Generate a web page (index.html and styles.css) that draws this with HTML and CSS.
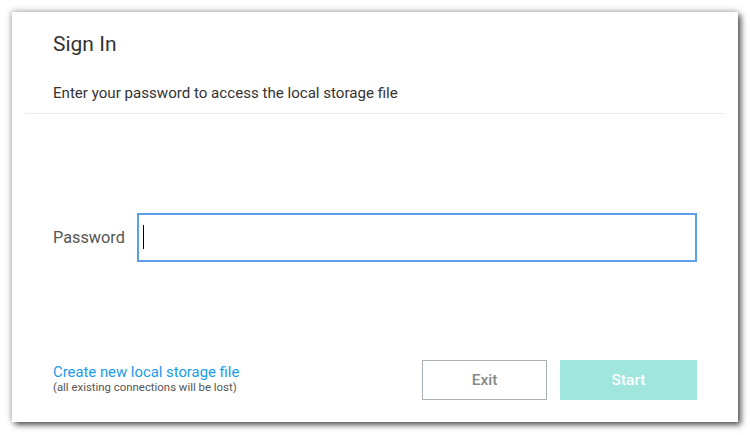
FILE: index.html
```html
<!DOCTYPE html>
<html>
<head>
<meta charset="utf-8">
<link rel="stylesheet" href="styles.css">
</head>
<body>
<div class="card">
  <div class="header">
    <div class="title">Sign In</div>
    <div class="subtitle">Enter your password to access the local storage file</div>
  </div>
  <div class="main">
    <label class="label">Password</label>
    <div class="input"><span class="caret"></span></div>
  </div>
  <div class="footer">
    <div class="create">
      <a class="link">Create new local storage file</a>
      <div class="note">(all existing connections will be lost)</div>
    </div>
    <div class="buttons">
      <button class="btn exit">Exit</button>
      <button class="btn start">Start</button>
    </div>
  </div>
</div>
</body>
</html>
```
FILE: styles.css
```css
html, body {
  margin: 0;
  padding: 0;
  background: #ffffff;
}
body {
  padding: 12px;
  font-family: Roboto, "Liberation Sans", sans-serif;
}
.card {
  width: 726px;
  height: 410px;
  background: #fff;
  box-shadow: 3px 3px 6px rgba(0, 0, 0, 0.65), -1px -1px 6px rgba(0,0,0,0.25);
  display: flex;
  flex-direction: column;
  box-sizing: border-box;
}
.header {
  margin: 0 13px;
  padding: 20px 0 0 28px;
  height: 102px;
  box-sizing: border-box;
  border-bottom: 1px solid #e6eceb;
}
.title {
  font-size: 21px;
  line-height: 24px;
  color: #333;
}
.subtitle {
  margin-top: 27px;
  font-size: 15.1px;
  line-height: 20px;
  color: #333;
}
.main {
  flex: 1;
  display: flex;
  align-items: center;
  padding: 0 41px 0 41px;
}
.label {
  font-size: 16.3px;
  color: #555;
  width: 84px;
}
.input {
  flex: 1;
  height: 49px;
  box-sizing: border-box;
  border: 2px solid #5b9fe6;
  display: flex;
  align-items: center;
  padding-left: 4px;
}
.caret {
  width: 1px;
  height: 24px;
  background: #000;
}
.footer {
  display: flex;
  justify-content: space-between;
  align-items: flex-end;
  padding: 0 41px 22px 41px;
}
.link {
  display: block;
  font-size: 14.85px;
  color: #1a9be8;
  line-height: 18px;
}
.note {
  font-size: 11.4px;
  color: #555;
  line-height: 13px;
  margin-bottom: 6px;
}
.buttons {
  display: flex;
  gap: 13px;
}
.btn {
  font-family: Roboto, "Liberation Sans", sans-serif;
  font-size: 15.5px;
  font-weight: 500;
  height: 40px;
  border: none;
  padding: 0;
}
.exit {
  width: 125px;
  background: #fff;
  border: 1px solid #aab2ba;
  color: #888;
}
.start {
  width: 137px;
  background: #a0e6dd;
  color: #fff;
}
```
